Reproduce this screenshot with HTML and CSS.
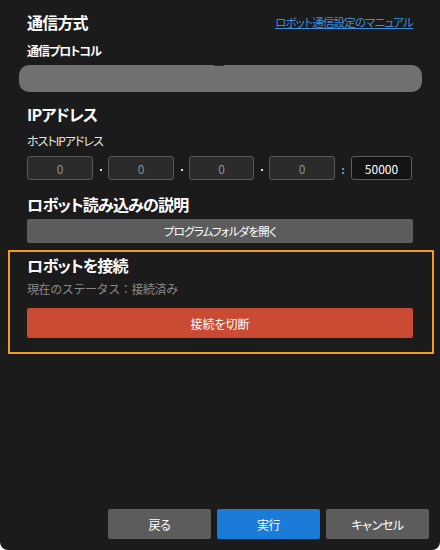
FILE: index.html
```html
<!DOCTYPE html>
<html lang="ja">
<head>
<meta charset="utf-8">
<link rel="stylesheet" href="styles.css">
</head>
<body>
<div class="panel">
  <div class="head-row">
    <h2 class="title">通信方式</h2>
    <a class="link" href="#">ロボット通信設定のマニュアル</a>
  </div>
  <div class="label bold">通信プロトコル</div>
  <div class="combo"></div>

  <h2 class="title sec-ip">IPアドレス</h2>
  <div class="label sub">ホストIPアドレス</div>
  <div class="ip-row">
    <div class="ip-box">0</div><span class="dot"></span>
    <div class="ip-box">0</div><span class="dot"></span>
    <div class="ip-box">0</div><span class="dot"></span>
    <div class="ip-box">0</div><span class="colon">:</span>
    <div class="port-box">50000</div>
  </div>

  <h2 class="title sec-load">ロボット読み込みの説明</h2>
  <div class="btn gray wide narrow">プログラムフォルダを開く</div>

  <div class="connect-box">
    <h2 class="title">ロボットを接続</h2>
    <div class="status">現在のステータス：接続済み</div>
    <div class="btn red wide tall">接続を切断</div>
  </div>

  <div class="footer">
    <div class="btn gray foot">戻る</div>
    <div class="btn blue foot">実行</div>
    <div class="btn gray foot">キャンセル</div>
  </div>
</div>
</body>
</html>
```
FILE: styles.css
```css
* { box-sizing: border-box; }
html, body { margin: 0; padding: 0; background: #ffffff; }
body {
  font-family: "Noto Sans CJK JP", "Noto Sans", sans-serif;
  font-feature-settings: "palt" 1;
  color: #ffffff;
}
.panel {
  width: 440px;
  height: 550px;
  background: #1b1b1b;
  border-radius: 0 0 8px 8px;
  display: flex;
  flex-direction: column;
  overflow: hidden;
}
.title {
  margin: 0;
  font-size: 16px;
  font-weight: 700;
  line-height: 24px;
  height: 24px;
  letter-spacing: -0.8px;
  color: #ffffff;
}
.head-row {
  display: flex;
  justify-content: space-between;
  align-items: center;
  margin: 10px 27px 0 27px;
  height: 23px;
}
.link {
  font-size: 11.5px;
  letter-spacing: -0.8px;
  color: #3b8fde;
  text-decoration: underline;
  line-height: 16px;
  margin-top: 1px;
}
.label {
  margin: 7px 27px 0 27px;
  font-size: 12px;
  line-height: 22px;
  height: 22px;
  letter-spacing: -1px;
}
.bold { font-weight: 700; }
.combo {
  position: relative;
  margin: 3px 18px 0 19px;
  height: 27px;
  border-radius: 10px;
  background: #707070;
}
.combo::before {
  content: "";
  position: absolute;
  left: 195px;
  top: 0;
  width: 10px;
  height: 1px;
  background: #2a2a2a;
}
.sec-ip { margin: 10px 27px 0 27px; }
.sub {
  margin: 5px 27px 0 27px;
  line-height: 20px;
  height: 20px;
  color: #e4e4e4;
}
.ip-row {
  margin: 5px 27px 0 27px;
  display: grid;
  grid-template-columns: 66px 15px 66px 15px 65px 15px 66px 16px 61px;
  height: 24px;
  align-items: center;
}
.ip-box, .port-box {
  height: 24px;
  border-radius: 3px;
  display: flex;
  align-items: center;
  justify-content: center;
  font-size: 12px;
}
.ip-box {
  background: #2b2b2b;
  border: 1px solid #595959;
  color: #8a8f96;
}
.port-box {
  background: #141414;
  border: 1px solid #5e5e5e;
  color: #ffffff;
}
.dot {
  justify-self: center;
  width: 2px;
  height: 2px;
  background: #e0e0e0;
  margin-top: 4px;
}
.colon {
  justify-self: center;
  font-size: 11px;
  color: #6aa8e8;
  font-weight: 700;
  margin-top: 2px;
}
.sec-load { margin: 12px 27px 0 27px; }
.btn {
  display: flex;
  align-items: center;
  justify-content: center;
  font-size: 12px;
  color: #ffffff;
  border-radius: 2px;
}
.narrow {
  font-size: 11.5px;
  letter-spacing: -0.8px;
}
.gray { background: #5c5c5c; }
.red { background: #c94b34; }
.blue { background: #1a7bd8; }
.wide {
  margin: 3px 27px 0 27px;
  height: 24px;
}
.connect-box {
  margin: 7px 6px 0 8px;
  border: 2px solid #f39c1e;
  padding: 1px 19px 14px 17px;
}
.connect-box .wide { margin: 9px 0 0 0; }
.tall { height: 30px; }
.status {
  margin-top: 2px;
  font-size: 12px;
  font-feature-settings: normal;
  letter-spacing: -0.4px;
  line-height: 20px;
  height: 20px;
  color: #8a8a8a;
}
.footer {
  margin-top: auto;
  display: flex;
  justify-content: flex-end;
  gap: 6px;
  padding: 0 11px 11px 0;
}
.foot {
  width: 103px;
  height: 30px;
  font-size: 12px;
  letter-spacing: -0.4px;
}
```
